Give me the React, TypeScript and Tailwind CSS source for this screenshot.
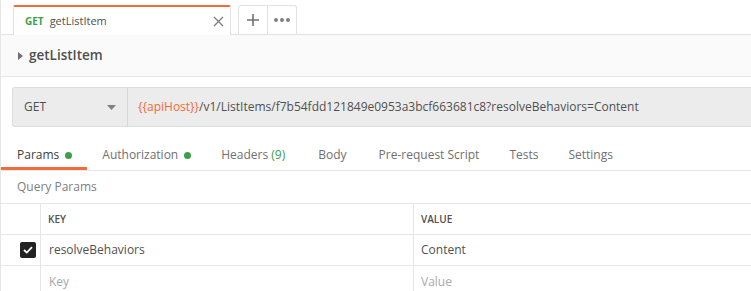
import React from "react";

const font = { fontFamily: '"Open Sans", "Noto Sans", sans-serif' };

function Tab({ children, first }: { children: React.ReactNode; first?: boolean }) {
  return (
    <div className={first ? "h-[29px] flex items-start pt-[6px] pl-[16px] pr-[15px] border-b-[3px] border-[#f26b3a]" : "h-[29px] flex items-start pt-[6px] px-[15px]"}>
      {children}
    </div>
  );
}

export default function App() {
  return (
    <div className="w-[751px] h-[291px] overflow-hidden bg-white border-l border-[#e6e6e6] text-[#505050]" style={font}>
      {/* Tab bar */}
      <div className="flex h-[35px] items-end">
        <div className="w-[12px] h-full border-b border-[#e2e2e2]" />
        <div className="w-[218px] h-[30px] flex items-center border-t-2 border-t-[#f26b3a] border-x border-x-[#e2e2e2] bg-white rounded-t-[2px]">
          <span className="ml-[11px] text-[10px] font-bold text-[#3ca04a]">GET</span>
          <span className="ml-[6px] text-[11px] text-[#505050]">getListItem</span>
          <svg className="ml-auto mr-[6px]" width="11" height="11" viewBox="0 0 11 11">
            <path d="M1 1 L10 10 M10 1 L1 10" stroke="#808080" strokeWidth="1.4" />
          </svg>
        </div>
        <div className="w-[7px] h-full border-b border-[#e2e2e2]" />
        <div className="h-[30px] flex border border-b-0 border-[#e2e2e2] rounded-t-[3px]">
          <div className="w-[29px] h-full flex items-center justify-center border-r border-[#e2e2e2] border-b border-b-[#e2e2e2]">
            <svg width="12" height="12" viewBox="0 0 12 12">
              <path d="M6 0 V12 M0 6 H12" stroke="#707070" strokeWidth="1.6" />
            </svg>
          </div>
          <div className="w-[28px] h-full flex items-center justify-center gap-[2px] border-b border-[#e2e2e2]">
            <span className="w-[4px] h-[4px] rounded-full bg-[#808080]" />
            <span className="w-[4px] h-[4px] rounded-full bg-[#808080]" />
            <span className="w-[4px] h-[4px] rounded-full bg-[#808080]" />
          </div>
        </div>
        <div className="flex-1 h-full border-b border-[#e2e2e2]" />
      </div>

      {/* Header */}
      <div className="h-[42px] bg-[#fafafa] border-b border-[#e6e6e6] flex items-center pl-[17px]">
        <svg width="6" height="8" viewBox="0 0 6 8">
          <path d="M0 0 L5 4 L0 8 Z" fill="#707070" />
        </svg>
        <span className="ml-[5px] text-[13.5px] text-[#505050] font-semibold">getListItem</span>
      </div>

      {/* URL bar */}
      <div className="pt-[10px] pl-[11px]">
        <div className="h-[40px] flex border border-r-0 border-[#dcdcdc] rounded-l-[3px] bg-[#ececec]">
          <div className="w-[115px] flex items-center pl-[11px] pr-[11px] border-r border-[#d6d6d6]">
            <span className="text-[12px] text-[#505050]">GET</span>
            <svg className="ml-auto" width="9" height="5" viewBox="0 0 9 5">
              <path d="M0 0 H9 L4.5 5 Z" fill="#808080" />
            </svg>
          </div>
          <div className="flex-1 flex items-center pl-[10px] text-[12px] whitespace-nowrap">
            <span className="text-[#f26b3a]">{"{{apiHost}}"}</span>
            <span className="text-[#505050]">/v1/ListItems/f7b54fdd121849e0953a3bcf663681c8?resolveBehaviors=Content</span>
          </div>
        </div>
      </div>

      {/* Request tabs */}
      <div className="h-[44px] flex items-end border-b border-[#e6e6e6] text-[12px] leading-[16px]">
        <Tab first>
          <span className="text-[#404040]">Params</span>
          <span className="ml-[6px] mt-[5px] w-[7px] h-[7px] rounded-full bg-[#3ca04a]" />
        </Tab>
        <Tab>
          <span className="text-[#707070]">Authorization</span>
          <span className="ml-[6px] mt-[5px] w-[7px] h-[7px] rounded-full bg-[#3ca04a]" />
        </Tab>
        <Tab>
          <span className="text-[#707070]">Headers <span className="text-[#3ca04a]">(9)</span></span>
        </Tab>
        <div className="h-[29px] flex items-start pt-[6px] pl-[18px] pr-[15px]">
          <span className="text-[#707070]">Body</span>
        </div>
        <div className="h-[29px] flex items-start pt-[6px] pl-[17px] pr-[15px]">
          <span className="text-[#707070]">Pre-request Script</span>
        </div>
        <Tab>
          <span className="text-[#707070]">Tests</span>
        </Tab>
        <Tab>
          <span className="text-[#707070]">Settings</span>
        </Tab>
      </div>

      {/* Query Params */}
      <div className="h-[33px] flex items-center pl-[16px] border-b border-[#e6e6e6]">
        <span className="text-[12px] text-[#808080]">Query Params</span>
      </div>

      {/* Table */}
      <div className="grid grid-cols-[40px_373px_1fr]">
        <div className="h-[31px] border-r border-b border-[#e6e6e6]" />
        <div className="h-[31px] border-r border-b border-[#e6e6e6] flex items-center pl-[7px] text-[10px] font-semibold text-[#505050]">KEY</div>
        <div className="h-[31px] border-b border-[#e6e6e6] flex items-center pl-[7px] text-[10px] font-semibold text-[#505050]">VALUE</div>

        <div className="h-[31px] border-r border-b border-[#e6e6e6] flex items-center justify-end pr-[4px]">
          <div className="w-[16px] h-[16px] rounded-[2px] bg-[#222222] flex items-center justify-center">
            <svg width="10" height="8" viewBox="0 0 10 8">
              <path d="M1 4 L3.8 6.6 L9 1.2" stroke="white" strokeWidth="1.8" fill="none" />
            </svg>
          </div>
        </div>
        <div className="h-[31px] border-r border-b border-[#e6e6e6] flex items-center pl-[8px] text-[12px] text-[#505050]">resolveBehaviors</div>
        <div className="h-[31px] border-b border-[#e6e6e6] flex items-center pl-[7px] text-[12px] text-[#505050]">Content</div>

        <div className="h-[31px] border-r border-[#e6e6e6]" />
        <div className="h-[31px] border-r border-[#e6e6e6] flex items-center pl-[8px] text-[12px] text-[#a8a8a8]">Key</div>
        <div className="h-[31px] flex items-center pl-[7px] text-[12px] text-[#a8a8a8]">Value</div>
      </div>
    </div>
  );
}
